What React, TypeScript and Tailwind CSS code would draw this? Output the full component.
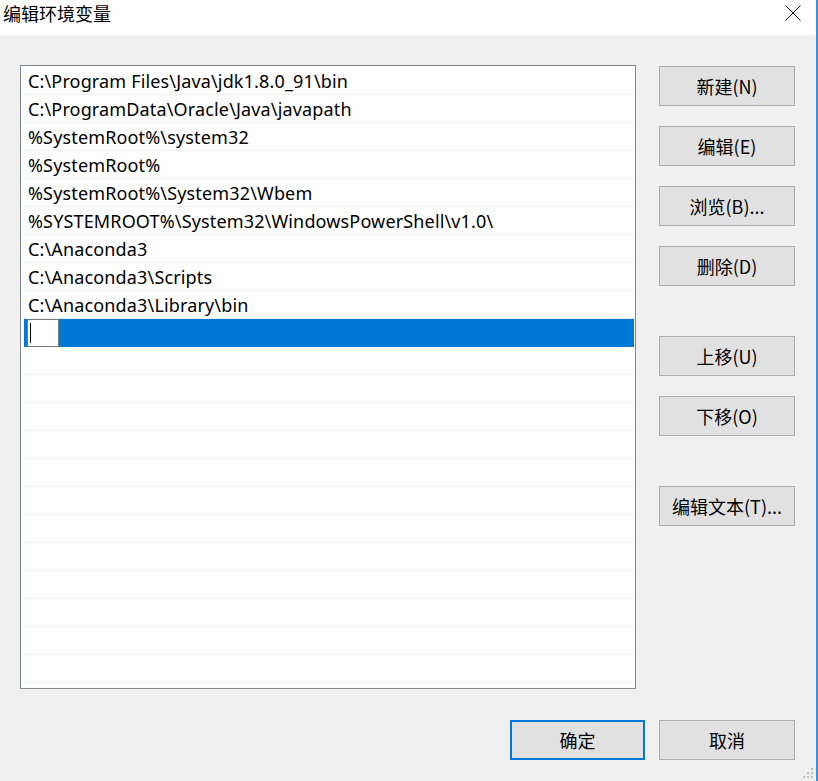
import React from "react";

const items = [
  "C:\\Program Files\\Java\\jdk1.8.0_91\\bin",
  "C:\\ProgramData\\Oracle\\Java\\javapath",
  "%SystemRoot%\\system32",
  "%SystemRoot%",
  "%SystemRoot%\\System32\\Wbem",
  "%SYSTEMROOT%\\System32\\WindowsPowerShell\\v1.0\\",
  "C:\\Anaconda3",
  "C:\\Anaconda3\\Scripts",
  "C:\\Anaconda3\\Library\\bin",
];

const TOTAL_ROWS = 22;

function Btn({ label, primary = false }: { label: string; primary?: boolean }) {
  return (
    <div
      className={
        "h-[40px] flex items-center justify-center bg-[#e1e1e1] text-[18px] text-black " +
        (primary ? "w-[135px] border-2 border-[#0078d7]" : "w-[136px] border border-[#adadad]")
      }
      style={{ fontFamily: '"Noto Sans CJK SC", "Noto Sans", sans-serif' }}
    >
      {label}
    </div>
  );
}

export default function App() {
  const rows = Array.from({ length: TOTAL_ROWS }, (_, i) => i);
  return (
    <div className="w-[818px] h-[781px] bg-[#f0f0f0] flex flex-col relative overflow-hidden">
      {/* title bar */}
      <div className="h-[35px] bg-white flex items-start justify-between shrink-0">
        <div
          className="pl-[3px] pt-[1px] text-[18px] leading-[24px] text-black"
          style={{ fontFamily: '"Noto Sans CJK SC", sans-serif' }}
        >
          编辑环境变量
        </div>
        <div className="w-[16px] h-[16px] mr-[17px] mt-[5px]">
          <svg width="16" height="16" viewBox="0 0 16 16">
            <path d="M0.5 0.5 L15.5 15.5 M15.5 0.5 L0.5 15.5" stroke="#111" strokeWidth="1" fill="none" />
          </svg>
        </div>
      </div>

      {/* body */}
      <div className="flex flex-row pl-[20px] pt-[30px]">
        <div
          className="w-[616px] h-[624px] border border-[#828790] bg-white pt-[1px] pl-[3px] pr-[1px] flex flex-col"
          style={{ fontFamily: '"Noto Sans", "Open Sans", sans-serif' }}
        >
          {rows.map((i) => {
            const selected = i === items.length;
            return (
              <div
                key={i}
                className={
                  "h-[28px] shrink-0 flex items-center text-[18px] text-black " +
                  (selected ? "bg-[#0078d7]" : "border-b border-[#f0f0f0]")
                }
              >
                {selected ? (
                  <div className="ml-[3px] w-[32px] h-[28px] bg-white border border-[#7a7a7a] flex items-center pl-[2px]">
                    <div className="w-[1px] h-[20px] bg-black" />
                  </div>
                ) : (
                  <span className="pl-[4px] whitespace-nowrap leading-[28px] tracking-[0.15px]">{items[i] ?? ""}</span>
                )}
              </div>
            );
          })}
        </div>

        <div className="ml-[23px] pt-[1px] flex flex-col">
          <Btn label="新建(N)" />
          <div className="h-[20px]" />
          <Btn label="编辑(E)" />
          <div className="h-[20px]" />
          <Btn label="浏览(B)..." />
          <div className="h-[20px]" />
          <Btn label="删除(D)" />
          <div className="h-[50px]" />
          <Btn label="上移(U)" />
          <div className="h-[20px]" />
          <Btn label="下移(O)" />
          <div className="h-[50px]" />
          <Btn label="编辑文本(T)..." />
        </div>
      </div>

      {/* bottom buttons */}
      <div className="flex flex-row pl-[510px] pt-[31px] gap-[14px]">
        <Btn label="确定" primary />
        <Btn label="取消" />
      </div>

      {/* right window border */}
      <div className="absolute right-0 top-0 w-[2px] h-full bg-[#3a8fd6]" />
      {/* size grip */}
      <svg className="absolute right-[4px] bottom-[2px]" width="12" height="12" viewBox="0 0 12 12">
        <rect x="9" y="1" width="2" height="2" fill="#bdbdbd" />
        <rect x="5" y="5" width="2" height="2" fill="#bdbdbd" />
        <rect x="9" y="5" width="2" height="2" fill="#bdbdbd" />
        <rect x="1" y="9" width="2" height="2" fill="#bdbdbd" />
        <rect x="5" y="9" width="2" height="2" fill="#bdbdbd" />
        <rect x="9" y="9" width="2" height="2" fill="#bdbdbd" />
      </svg>
    </div>
  );
}
